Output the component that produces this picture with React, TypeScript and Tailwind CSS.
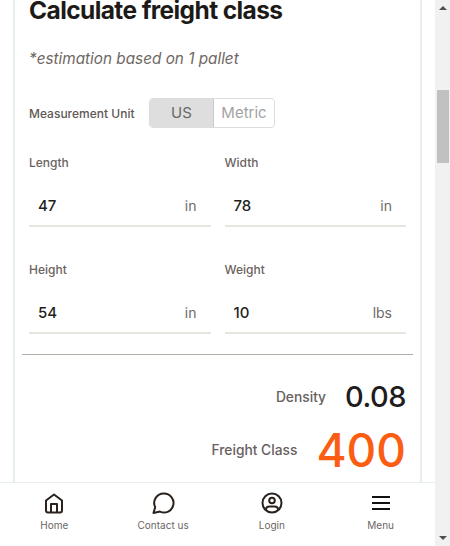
const font = "font-['Inter','Liberation_Sans',sans-serif]";

interface FieldProps {
  label: string;
  value: string;
  unit: string;
}

const Field = ({ label, value, unit }: FieldProps) => (
  <div className="flex flex-col">
    <label className="text-[12px] leading-[16px] font-medium text-[#6b6360]">{label}</label>
    <div className="mt-[24px] flex h-[32px] items-start justify-between border-b-2 border-[#e8e4de] pl-[9px] pr-[14px]">
      <span className="text-[15px] leading-[22px] font-medium text-[#231f20]">{value}</span>
      <span className="text-[14px] leading-[22px] text-[#6f6a68]">{unit}</span>
    </div>
  </div>
);

const navItems = [
  {
    label: "Home",
    icon: (
      <svg width="20" height="21" viewBox="0 0 20 21" fill="none" stroke="#2b211d" strokeWidth="2" strokeLinejoin="round">
        <path d="M2 7.500 10 1.500l8 6V17.500a2 2 0 0 1-2 2H4a2 2 0 0 1-2-2Z" />
        <path d="M7 19.500V11h6v8.500" />
      </svg>
    ),
  },
  {
    label: "Contact us",
    icon: (
      <svg width="24" height="24" viewBox="0 0 24 24" fill="none" stroke="#2b211d" strokeWidth="2" strokeLinejoin="round">
        <path d="M13 2.500a9.500 9.500 0 1 1-4 18.100L2.500 22l1.700-5.800A9.500 9.500 0 0 1 13 2.500Z" />
      </svg>
    ),
  },
  {
    label: "Login",
    icon: (
      <svg width="24" height="24" viewBox="0 0 24 24" fill="none" stroke="#2b211d" strokeWidth="2">
        <circle cx="12" cy="12" r="9.500" />
        <circle cx="12" cy="9.500" r="2.800" />
        <path d="M6 19v-.500c0-2 1.500-3 3.500-3h5c2 0 3.500 1 3.500 3v.500" />
      </svg>
    ),
  },
  {
    label: "Menu",
    icon: (
      <svg width="24" height="24" viewBox="0 0 24 24" fill="none" stroke="#111" strokeWidth="2">
        <path d="M3 6h18M3 12h18M3 18h18" />
      </svg>
    ),
  },
];

export default function App() {
  return (
    <div className={`flex h-[546px] w-[450px] overflow-hidden bg-white ${font}`}>
      <div className="flex w-[435px] flex-col">
        <main className="h-[482px] overflow-hidden">
          <div className="ml-[13px] h-full w-[409px] border-x-2 border-[#e6eeee]">
            <h1 className="ml-[14px] text-[24.5px] leading-[20px] font-bold tracking-[-0.6px] text-[#1d1a18]">
              Calculate freight class
            </h1>
            <p className="ml-[14px] mt-[27px] text-[15.300px] leading-[24px] italic text-[#6f6764]">
              *estimation based on 1 pallet
            </p>

            <div className="ml-[14px] mt-[27px] flex items-center">
              <span className="mt-[2px] w-[120px] text-[12px] font-medium text-[#5f5856]">Measurement Unit</span>
              <div className="flex h-[30px] w-[126px] overflow-hidden rounded-[4px] border border-[#dcdcdc] text-[15px]">
                <span className="flex w-[63px] items-center justify-center bg-[#dedede] text-[#6b6866]">US</span>
                <span className="flex flex-1 items-center justify-center border-l border-[#c9c9c9] text-[#a3a3a3]">Metric</span>
              </div>
            </div>

            <div className="ml-[14px] mt-[27px] grid w-[377px] grid-cols-2 gap-x-[14px] gap-y-[35px]">
              <Field label="Length" value="47" unit="in" />
              <Field label="Width" value="78" unit="in" />
              <Field label="Height" value="54" unit="in" />
              <Field label="Weight" value="10" unit="lbs" />
            </div>

            <div className="ml-[7px] mt-[20px] h-px w-[391px] bg-[#b5aea6]" />

            <div className="mr-[14px] mt-[26px] flex items-center justify-end">
              <span className="text-[13.800px] font-medium text-[#67605e]">Density</span>
              <span className="ml-[19px] text-[29px] leading-[32px] font-medium tracking-[-0.5px] text-[#1f1d1d]">0.08</span>
            </div>
            <div className="mr-[14px] mt-[11px] flex items-center justify-end">
              <span className="text-[13.800px] font-medium text-[#67605e]">Freight Class</span>
              <span className="ml-[19px] text-[46px] leading-[52px] font-medium text-[#fb5e12]">400</span>
            </div>
          </div>
        </main>

        <nav className="grid h-[64px] grid-cols-4 border-t border-[#e6eeee] bg-white">
          {navItems.map((item) => (
            <div key={item.label} className="flex flex-col items-center pt-[8px]">
              <div className="flex h-[24px] items-center">{item.icon}</div>
              <span className="mt-[3px] text-[10px] leading-[14px] text-[#6b6563]">{item.label}</span>
            </div>
          ))}
        </nav>
      </div>

      <div className="flex w-[15px] flex-col items-center bg-[#f1f1f1]">
        <div className="mt-[6px] h-0 w-0 border-x-[4px] border-b-[4px] border-x-transparent border-b-[#505050]" />
        <div className="mt-[80px] h-[73px] w-[12px] bg-[#c1c1c1]" />
        <div className="mt-auto mb-[6px] h-0 w-0 border-x-[4px] border-t-[4px] border-x-transparent border-t-[#505050]" />
      </div>
    </div>
  );
}
